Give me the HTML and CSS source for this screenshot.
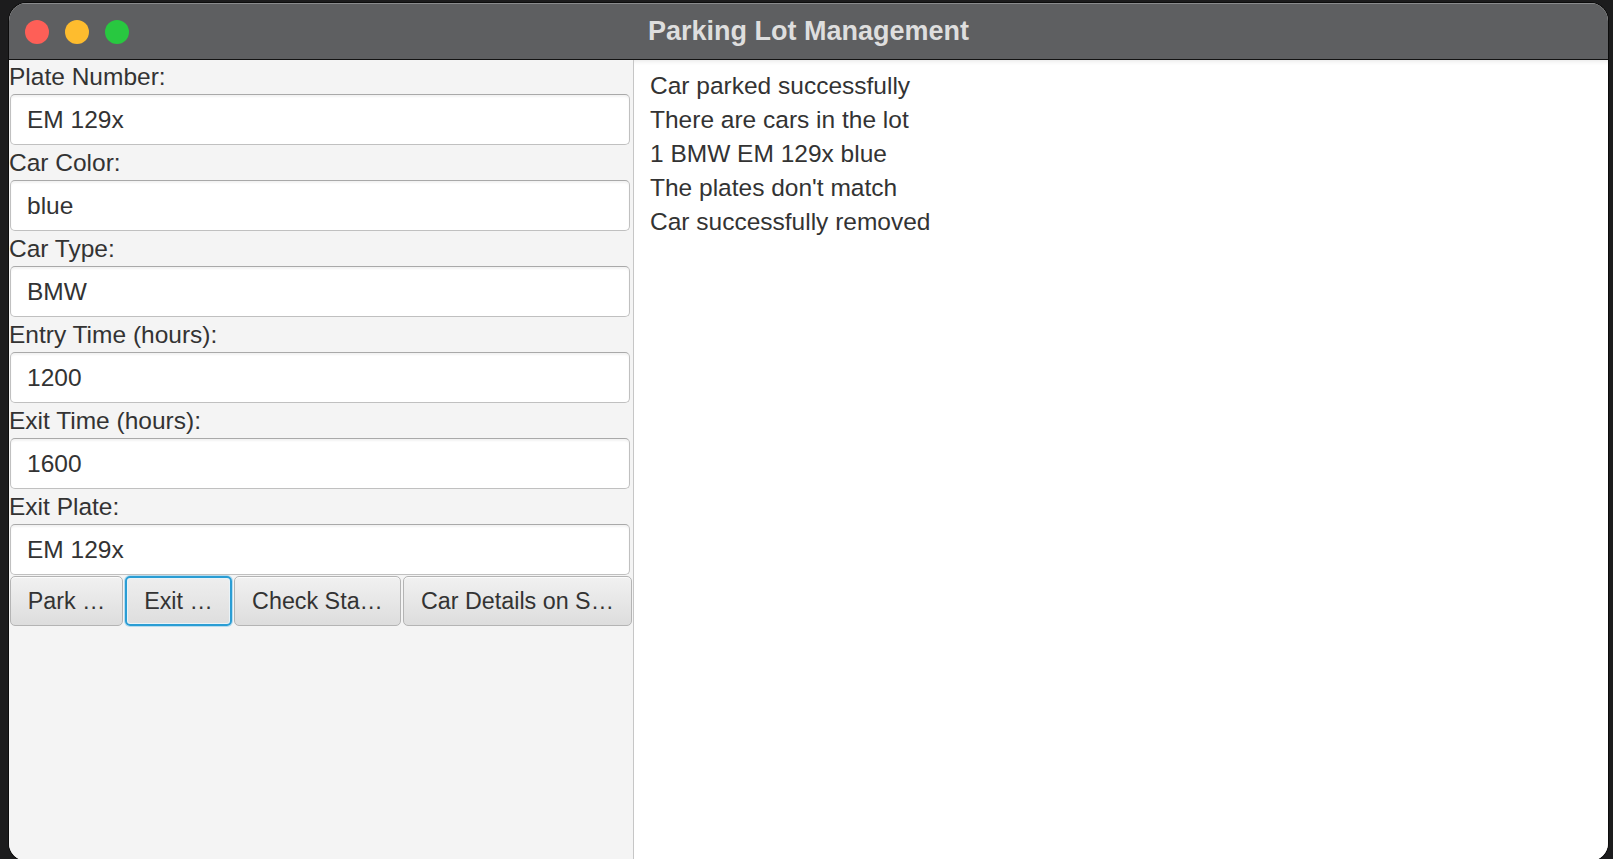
FILE: index.html
```html
<!DOCTYPE html>
<html lang="en">
<head>
<meta charset="utf-8">
<title>Parking Lot Management</title>
<link rel="stylesheet" href="styles.css">
</head>
<body>
<div class="window">
  <div class="titlebar">
    <div class="lights">
      <span class="light red"></span>
      <span class="light yellow"></span>
      <span class="light green"></span>
    </div>
    <div class="title">Parking Lot Management</div>
  </div>
  <div class="content">
    <div class="form">
      <div class="label first">Plate Number:</div>
      <div class="field">EM 129x</div>
      <div class="label">Car Color:</div>
      <div class="field">blue</div>
      <div class="label">Car Type:</div>
      <div class="field">BMW</div>
      <div class="label">Entry Time (hours):</div>
      <div class="field">1200</div>
      <div class="label">Exit Time (hours):</div>
      <div class="field">1600</div>
      <div class="label">Exit Plate:</div>
      <div class="field">EM 129x</div>
      <div class="buttons">
        <div class="btn btn-park">Park …</div>
        <div class="btn btn-exit focused">Exit …</div>
        <div class="btn btn-check">Check Sta…</div>
        <div class="btn btn-details">Car Details on S…</div>
      </div>
    </div>
    <div class="output">
      <div class="line">Car parked successfully</div>
      <div class="line">There are cars in the lot</div>
      <div class="line">1 BMW EM 129x blue</div>
      <div class="line">The plates don't match</div>
      <div class="line">Car successfully removed</div>
    </div>
  </div>
</div>
</body>
</html>
```
FILE: styles.css
```css
html, body {
  margin: 0;
  padding: 0;
  height: 100%;
}
body {
  background: #1c1c1d;
  overflow: hidden;
  font-family: "Liberation Sans", Arial, sans-serif;
}
.window {
  margin: 3px 0 0 9px;
  width: 1599px;
  height: 858px;
  box-sizing: border-box;
  border-radius: 18px;
  overflow: hidden;
  background: #f4f4f4;
  box-shadow: 0 0 0 1px #0c0c0c;
  display: flex;
  flex-direction: column;
}
.titlebar {
  height: 56px;
  flex: 0 0 56px;
  background: #5e5f61;
  border-bottom: 1px solid #121212;
  box-shadow: inset 0 1px 0 #8a8b8d;
  display: flex;
  align-items: center;
  justify-content: center;
  position: relative;
}
.lights {
  position: absolute;
  left: 16px;
  top: 17px;
  display: flex;
  gap: 16px;
}
.light {
  width: 24px;
  height: 24px;
  border-radius: 50%;
  display: block;
}
.red { background: #fe5f57; }
.yellow { background: #febc2e; }
.green { background: #28c840; }
.title {
  font-weight: bold;
  font-size: 27px;
  color: #dedede;
  margin-left: 0;
}
.content {
  flex: 1;
  display: flex;
  min-height: 0;
}
.form {
  width: 624px;
  flex: 0 0 624px;
  background: #f4f4f4;
  display: flex;
  flex-direction: column;
  padding-left: 1px;
  box-sizing: border-box;
}
.label {
  height: 35px;
  line-height: 35px;
  font-size: 24.5px;
  color: #333333;
  margin-left: -1px;
  white-space: nowrap;
}
.label.first {
  height: 34px;
  line-height: 34px;
}
.field {
  height: 51px;
  width: 620px;
  box-sizing: border-box;
  background: #ffffff;
  border: 1px solid #c0c0c0;
  border-top-color: #a9a9a9;
  border-radius: 5px;
  box-shadow: inset 0 2px 2px rgba(0, 0, 0, 0.05);
  font-size: 24.5px;
  color: #333333;
  padding-left: 16px;
  display: flex;
  align-items: center;
}
.buttons {
  margin-top: 1px;
  display: flex;
  gap: 2px;
  height: 50px;
}
.btn {
  height: 50px;
  box-sizing: border-box;
  border: 1px solid #b4b4b4;
  border-radius: 5px;
  background: linear-gradient(#f1f1f1, #dddddd);
  box-shadow: inset 0 1px 0 #fbfbfb;
  font-size: 23.3px;
  color: #333333;
  display: flex;
  align-items: center;
  justify-content: center;
  white-space: nowrap;
}
.btn-park { width: 113px; }
.btn-exit { width: 107px; }
.btn-check { width: 167px; }
.btn-details { width: 229px; }
.btn.focused {
  border: 2px solid #2a9dd4;
  box-shadow: 0 0 0 1px #b6dcef, inset 0 0 0 1px #e9f3f8;
  background: linear-gradient(#eeeeee, #dedede);
}
.output {
  flex: 1;
  background: #ffffff;
  border-left: 1px solid #c6c6c6;
  border-bottom: 1px solid #c6c6c6;
  box-shadow: inset 0 5px 5px -4px rgba(0, 0, 0, 0.10);
  padding: 9px 0 0 16px;
  margin-bottom: 1px;
}
.line {
  font-size: 24.5px;
  line-height: 34px;
  color: #333333;
  white-space: nowrap;
}
```
